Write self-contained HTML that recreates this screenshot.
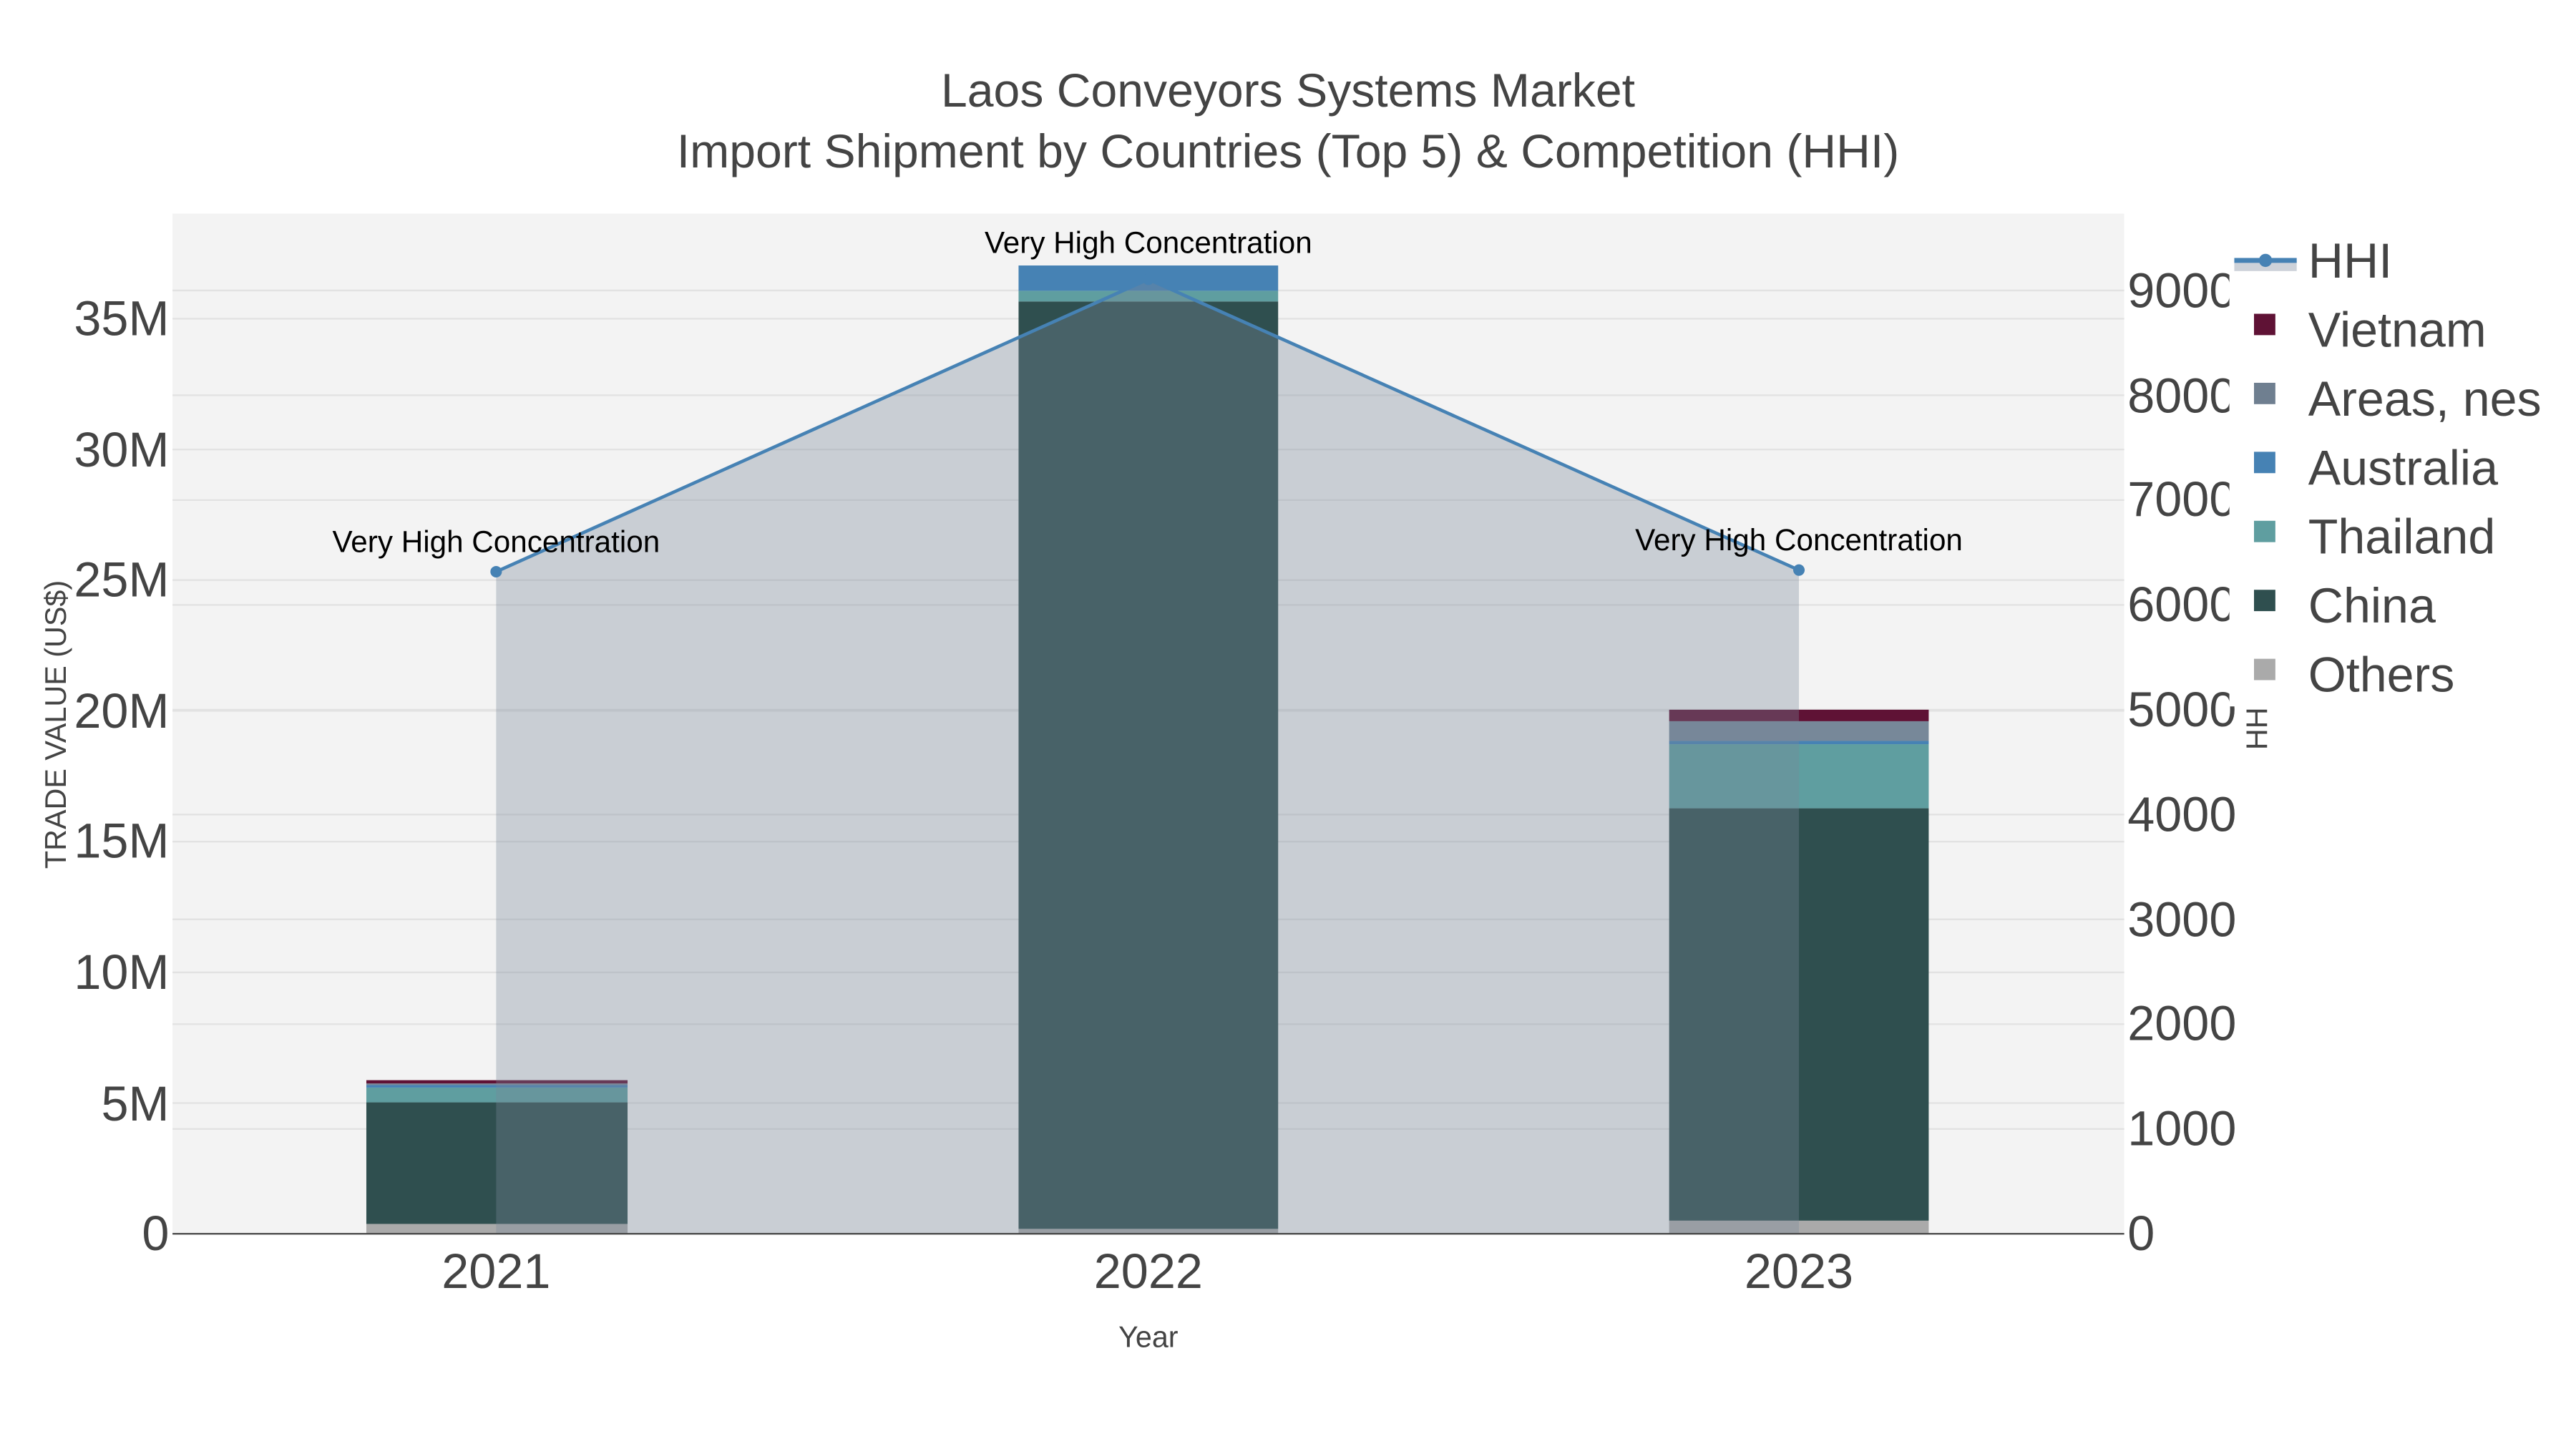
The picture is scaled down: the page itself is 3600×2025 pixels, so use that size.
<!DOCTYPE html><html><head><style>html,body{margin:0;padding:0;background:#fff}svg{display:block}</style></head><body>
<svg width="3600" height="2025" viewBox="0 0 1568 882" font-family="Liberation Sans, sans-serif">
<rect width="1568" height="882" fill="#fff"/>
<rect x="105" y="130" width="1188" height="621" fill="#f3f3f3"/>
<g stroke="#e2e2e2" stroke-width="1">
<line x1="105" x2="1293" y1="671.4" y2="671.4"/><line x1="105" x2="1293" y1="591.9" y2="591.9"/><line x1="105" x2="1293" y1="512.3" y2="512.3"/><line x1="105" x2="1293" y1="432.7" y2="432.7"/><line x1="105" x2="1293" y1="353.1" y2="353.1"/><line x1="105" x2="1293" y1="273.6" y2="273.6"/><line x1="105" x2="1293" y1="194" y2="194"/>
<line x1="105" x2="1293" y1="687.2" y2="687.2"/><line x1="105" x2="1293" y1="623.4" y2="623.4"/><line x1="105" x2="1293" y1="559.6" y2="559.6"/><line x1="105" x2="1293" y1="495.8" y2="495.8"/><line x1="105" x2="1293" y1="432" y2="432"/><line x1="105" x2="1293" y1="368.2" y2="368.2"/><line x1="105" x2="1293" y1="304.4" y2="304.4"/><line x1="105" x2="1293" y1="240.6" y2="240.6"/><line x1="105" x2="1293" y1="176.8" y2="176.8"/>
</g>
<rect x="223" y="745" width="159" height="6" fill="#aaa"/>
<rect x="223" y="671" width="159" height="74" fill="#2f4f4f"/>
<rect x="223" y="662" width="159" height="9" fill="#5f9ea0"/>
<rect x="223" y="660.5" width="159" height="1.5" fill="#4682b4"/>
<rect x="223" y="659.5" width="159" height="1" fill="#778899"/>
<rect x="223" y="657.5" width="159" height="2" fill="#5f1235"/>
<rect x="620" y="748" width="158" height="3" fill="#aaa"/>
<rect x="620" y="183.5" width="158" height="564.5" fill="#2f4f4f"/>
<rect x="620" y="177" width="158" height="6.5" fill="#5f9ea0"/>
<rect x="620" y="161.6" width="158" height="15.4" fill="#4682b4"/>
<rect x="1016" y="743" width="158" height="8" fill="#aaa"/>
<rect x="1016" y="492" width="158" height="251" fill="#2f4f4f"/>
<rect x="1016" y="453" width="158" height="39" fill="#5f9ea0"/>
<rect x="1016" y="451" width="158" height="2" fill="#4682b4"/>
<rect x="1016" y="439" width="158" height="12" fill="#778899"/>
<rect x="1016" y="432" width="158" height="7" fill="#5f1235"/>
<polygon points="302,751 302,348 699,170 1095,347 1095,751" fill="#778899" fill-opacity="0.34"/>
<polyline points="302,348 699,170 1095,347" fill="none" stroke="#4682b4" stroke-width="2"/>
<circle cx="302" cy="348" r="3.5" fill="#4682b4"/><circle cx="699" cy="170" r="3.5" fill="#4682b4"/><circle cx="1095" cy="347" r="3.5" fill="#4682b4"/>
<line x1="105" x2="1293" y1="751" y2="751" stroke="#444" stroke-width="1"/>
<g font-size="18.4" fill="#000" text-anchor="middle">
<text x="302" y="336">Very High Concentration</text><text x="699" y="154">Very High Concentration</text><text x="1095" y="335">Very High Concentration</text></g>
<g font-size="28.8" fill="#444" text-anchor="middle">
<text x="784" y="65">Laos Conveyors Systems Market</text>
<text x="784" y="102">Import Shipment by Countries (Top 5) &amp; Competition (HHI)</text>
</g>
<g font-size="29.8" fill="#444" text-anchor="middle">
<text x="302" y="784">2021</text><text x="699" y="784">2022</text><text x="1095" y="784">2023</text>
</g>
<g font-size="29.8" fill="#444" text-anchor="end">
<text x="103" y="761">0</text><text x="103" y="682">5M</text><text x="103" y="602">10M</text><text x="103" y="522">15M</text><text x="103" y="443">20M</text><text x="103" y="363">25M</text><text x="103" y="284">30M</text><text x="103" y="204">35M</text>
</g>
<g font-size="29.8" fill="#444">
<text x="1295" y="761">0</text><text x="1295" y="697">1000</text><text x="1295" y="633">2000</text><text x="1295" y="570">3000</text><text x="1295" y="506">4000</text><text x="1295" y="442">5000</text><text x="1295" y="378">6000</text><text x="1295" y="314">7000</text><text x="1295" y="251">8000</text><text x="1295" y="187">9000</text>
</g>
<text x="699" y="820" font-size="18" fill="#444" text-anchor="middle">Year</text>
<text transform="translate(40,441) rotate(-90)" font-size="18" fill="#444" text-anchor="middle">TRADE VALUE (US$)</text>
<text transform="translate(1380,441) rotate(-90)" font-size="18" fill="#444" text-anchor="middle">HHI</text>
<rect x="1357" y="140" width="211" height="290" fill="#fff"/>
<rect x="1360" y="159" width="38" height="6" fill="#cdd2d9"/>
<line x1="1360" x2="1398" y1="158.5" y2="158.5" stroke="#4682b4" stroke-width="3"/>
<circle cx="1379" cy="158.5" r="4" fill="#4682b4"/>
<rect x="1372" y="191" width="13" height="13" fill="#5f1235"/>
<rect x="1372" y="233" width="13" height="13" fill="#6f7f90"/>
<rect x="1372" y="275" width="13" height="13" fill="#4682b4"/>
<rect x="1372" y="317" width="13" height="13" fill="#5f9ea0"/>
<rect x="1372" y="359" width="13" height="13" fill="#2f4f4f"/>
<rect x="1372" y="401" width="13" height="13" fill="#aaa"/>
<g font-size="29.7" fill="#444">
<text x="1405" y="169">HHI</text><text x="1405" y="211">Vietnam</text><text x="1405" y="253">Areas, nes</text><text x="1405" y="295">Australia</text><text x="1405" y="337">Thailand</text><text x="1405" y="379">China</text><text x="1405" y="421">Others</text>
</g>
</svg>
</body></html>
